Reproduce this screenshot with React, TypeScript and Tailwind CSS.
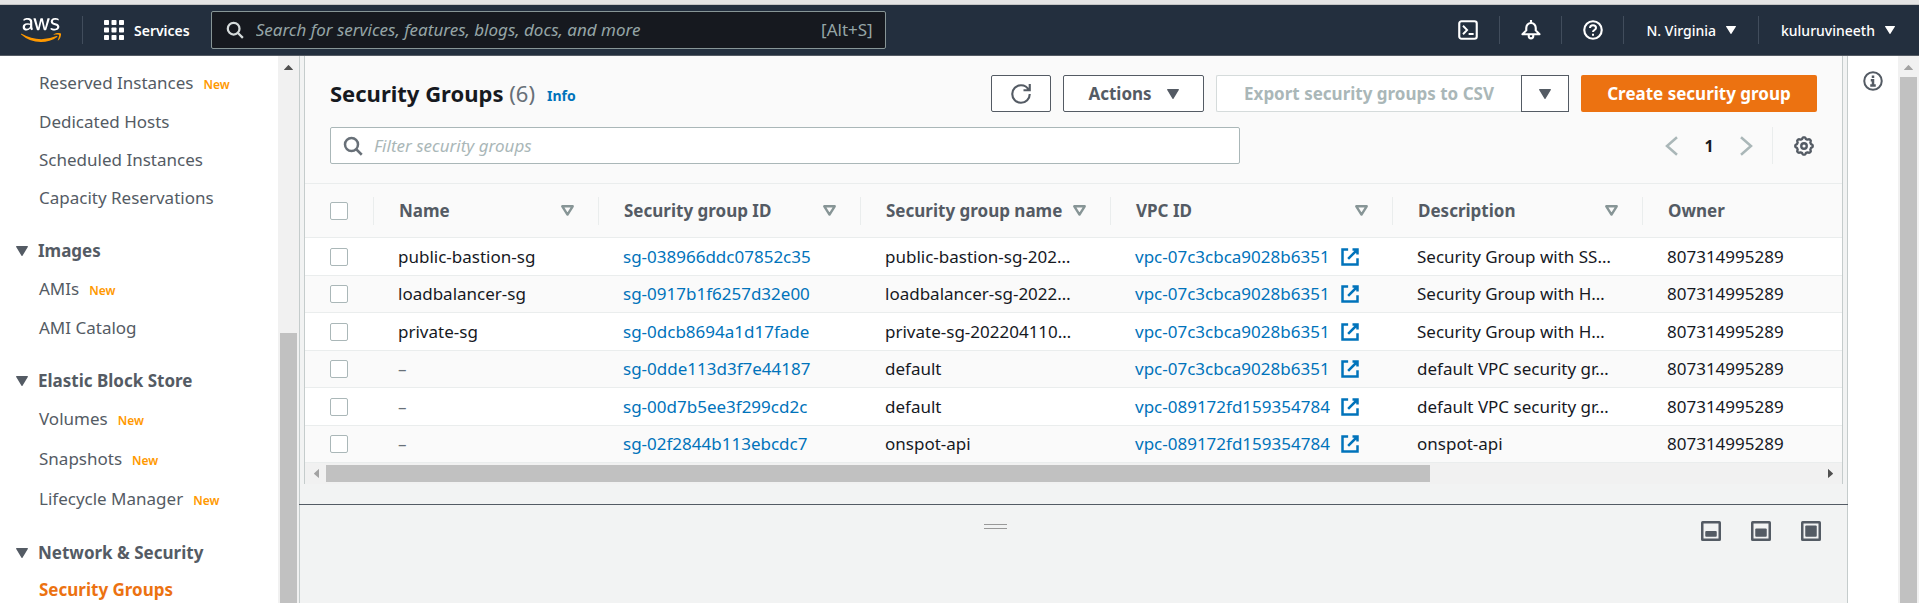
import type { ReactNode } from "react";
import { FaAws } from "react-icons/fa";

type NavItem = { label: string; isNew?: boolean; active?: boolean };
type NavSection = { title?: string; items: NavItem[] };

const NAV: NavSection[] = [
  {
    items: [
      { label: "Reserved Instances", isNew: true },
      { label: "Dedicated Hosts" },
      { label: "Scheduled Instances" },
      { label: "Capacity Reservations" },
    ],
  },
  { title: "Images", items: [{ label: "AMIs", isNew: true }, { label: "AMI Catalog" }] },
  {
    title: "Elastic Block Store",
    items: [
      { label: "Volumes", isNew: true },
      { label: "Snapshots", isNew: true },
      { label: "Lifecycle Manager", isNew: true },
    ],
  },
  { title: "Network & Security", items: [{ label: "Security Groups", active: true }] },
];

const COLUMNS = [
  { label: "Name", width: "w-[225px]" },
  { label: "Security group ID", width: "w-[262px]" },
  { label: "Security group name", width: "w-[250px]" },
  { label: "VPC ID", width: "w-[282px]" },
  { label: "Description", width: "w-[250px]" },
];

const ROWS = [
  ["public-bastion-sg", "sg-038966ddc07852c35", "public-bastion-sg-202…", "vpc-07c3cbca9028b6351", "Security Group with SS…"],
  ["loadbalancer-sg", "sg-0917b1f6257d32e00", "loadbalancer-sg-2022…", "vpc-07c3cbca9028b6351", "Security Group with H…"],
  ["private-sg", "sg-0dcb8694a1d17fade", "private-sg-202204110…", "vpc-07c3cbca9028b6351", "Security Group with H…"],
  ["–", "sg-0dde113d3f7e44187", "default", "vpc-07c3cbca9028b6351", "default VPC security gr…"],
  ["–", "sg-00d7b5ee3f299cd2c", "default", "vpc-089172fd159354784", "default VPC security gr…"],
  ["–", "sg-02f2844b113ebcdc7", "onspot-api", "vpc-089172fd159354784", "onspot-api"],
];
const OWNER = "807314995289";

function Icon({ children, className = "size-5" }: { children: ReactNode; className?: string }) {
  return (
    <svg viewBox="0 0 16 16" aria-hidden="true" className={`shrink-0 fill-none stroke-current stroke-2 ${className}`}>
      {children}
    </svg>
  );
}

function Caret({ className }: { className: string }) {
  return (
    <svg viewBox="0 0 12 10" aria-hidden="true" preserveAspectRatio="none" className={`shrink-0 fill-current ${className}`}>
      <path d="M.6 0h10.8c.5 0 .7.5.4.9L6.5 9.7c-.3.4-.7.4-1 0L.2.9C-.1.5.1 0 .6 0z" />
    </svg>
  );
}

const SearchIcon = ({ className }: { className: string }) => (
  <Icon className={className}>
    <circle cx="6.8" cy="6.8" r="5.2" />
    <path d="M10.6 10.6l4.4 4.4" />
  </Icon>
);

function gearPath() {
  const points: string[] = [];
  for (let i = 0; i <= 96; i++) {
    const a = (i / 96) * Math.PI * 2;
    const r = 6.35 + 0.6 * Math.max(-1, Math.min(1, 1.6 * Math.cos(8 * a)));
    points.push(`${(8 + r * Math.sin(a)).toFixed(2)} ${(8 - r * Math.cos(a)).toFixed(2)}`);
  }
  return `M${points.join("L")}z`;
}

function TopBar() {
  return (
    <header className="flex h-[51px] shrink-0 items-center border-b border-[#545b64] bg-[#232f3e] text-white">
      <svg width="0" height="0" aria-hidden="true" className="absolute">
        <linearGradient id="aws-fill" x1="0" y1="0" x2="0" y2="1">
          <stop offset="0.64" stopColor="#fff" />
          <stop offset="0.64" stopColor="#ff9900" />
        </linearGradient>
      </svg>
      <a href="#home" aria-label="AWS" className="ml-[21px] flex">
        <FaAws className="h-8 w-10 [&_path]:fill-[url(#aws-fill)]" />
      </a>
      <span className="ml-[21px] h-7 w-px bg-[#414d5c]" />
      <button type="button" className="ml-[21px] flex items-center gap-[10px] text-[14px] font-semibold">
        <svg viewBox="0 0 20 20" aria-hidden="true" className="size-5 fill-white">
          {[0, 7.5, 15].map((y) => [0, 7.5, 15].map((x) => <rect key={`${x}-${y}`} x={x} y={y} width="5" height="5" rx="0.8" />))}
        </svg>
        Services
      </button>
      <label className="ml-[21px] flex h-[38px] w-[675px] items-center rounded-[2px] border border-[#879596] bg-[#16191f] pr-3 pl-[14px]">
        <SearchIcon className="size-[18px] text-[#d5dbdb]" />
        <input
          type="search"
          aria-label="Search"
          placeholder="Search for services, features, blogs, docs, and more"
          className="ml-3 min-w-0 flex-1 bg-transparent text-[17px] outline-none placeholder:text-[#95a5a6] placeholder:italic"
        />
        <span className="text-[17px] text-[#95a5a6]">[Alt+S]</span>
      </label>
      <div className="ml-auto flex h-7 items-stretch">
        <button type="button" aria-label="CloudShell" className="flex w-[62px] items-center justify-center">
          <Icon>
            <rect x="1" y="1" width="14" height="14" rx="1.8" strokeWidth="1.7" />
            <path d="M4 4.6L7.3 8 4 11.4M8.5 11.2h4" strokeWidth="1.5" />
          </Icon>
        </button>
        <button type="button" aria-label="Notifications" className="flex w-[62px] items-center justify-center border-l border-[#414d5c]">
          <Icon>
            <path d="M8 0v2.200M1.200 11.400h13.600L11.800 8.300V6.400c0-2.300-1.500-4-3.800-4s-3.800 1.700-3.800 4v1.900zM6.200 11.500v1.500c0 2.200 3.600 2.200 3.600 0v-1.500" strokeWidth="1.700" strokeLinejoin="round" />
          </Icon>
        </button>
        <button type="button" aria-label="Help" className="flex w-[62px] items-center justify-center border-l border-[#414d5c]">
          <Icon>
            <circle cx="8" cy="8" r="7" strokeWidth="1.7" />
            <path d="M5.600 6.400C5.600 5 6.600 4.100 8 4.100s2.400.9 2.400 2.200C10.400 8 8 8 8 9.600M8 10.900v1.600" strokeWidth="1.600" />
          </Icon>
        </button>
        <button type="button" className="flex items-center gap-[10px] border-l border-[#414d5c] px-[22px] text-[14px] font-medium">
          N. Virginia
          <Caret className="h-2 w-[10px]" />
        </button>
        <button type="button" className="flex items-center gap-[10px] border-l border-[#414d5c] pr-6 pl-[22px] text-[14px] font-medium">
          kuluruvineeth
          <Caret className="h-2 w-[10px]" />
        </button>
      </div>
    </header>
  );
}

function SideNav() {
  return (
    <div className="flex w-[299px] shrink-0 bg-white">
      <nav aria-label="EC2" className="min-w-0 flex-1 overflow-hidden pt-[7px]">
        {NAV.map((section, i) => (
          <section key={i}>
            {section.title && (
              <h2 className="mt-[15px] h-[37px] text-[17px] font-bold text-[#545b64]">
                <button type="button" className="flex h-full items-center gap-[10px] pl-4">
                  <Caret className="h-[10px] w-3" />
                  {section.title}
                </button>
              </h2>
            )}
            <ul>
              {section.items.map((item) => (
                <li key={item.label} className={`flex items-center pl-[39px] ${item.isNew ? "h-10" : "h-[38px]"}`}>
                  <a
                    href={`#${item.label.replace(/ /g, "-").toLowerCase()}`}
                    className={item.active ? "text-[17px] font-bold text-[#ec7211]" : "text-[17px] text-[#545b64]"}
                  >
                    {item.label}
                  </a>
                  {item.isNew && <span className="ml-[10px] pt-[3px] text-[12px] font-semibold text-[#ff9900]">New</span>}
                </li>
              ))}
            </ul>
          </section>
        ))}
      </nav>
      <div aria-hidden="true" className="flex w-[21px] flex-col items-center bg-[#f1f1f1] pt-[9px] text-[#505050]">
        <Caret className="h-[5px] w-[9px] rotate-180" />
        <div className="mt-[263px] w-[17px] flex-1 bg-[#c1c1c1]" />
      </div>
    </div>
  );
}

function Checkbox({ label }: { label: string }) {
  return (
    <input
      type="checkbox"
      aria-label={label}
      className="block size-[18px] appearance-none rounded-[2px] border border-[#aab7b8] bg-white checked:bg-[#0073bb]"
    />
  );
}

const outlined = "flex h-[37px] items-center justify-center border border-[#545b64] bg-white text-[17px] font-bold text-[#545b64]";

function GroupsPanel() {
  return (
    <section className="mx-1 border-x border-[#c5cccc] bg-[#fafafa]">
      <div className="flex items-center px-[25px] pt-[19px]">
        <h1 className="text-[22px] leading-[37px] font-bold text-[#16191f]">
          Security Groups <span className="font-normal text-[#687078]">(6)</span>
        </h1>
        <a href="#info" className="ml-3 pt-1 text-[14px] font-bold text-[#0073bb]">
          Info
        </a>
        <div className="ml-auto flex gap-3">
          <button type="button" aria-label="Refresh" className={`${outlined} w-[60px] rounded-[2px]`}>
            <Icon>
              <path d="M15 8c0 3.870-3.130 7-7 7s-7-3.130-7-7 3.130-7 7-7c2.790 0 5.200 1.640 6.320 4M15 0v5h-5" strokeWidth="1.700" />
            </Icon>
          </button>
          <button type="button" className={`${outlined} w-[141px] gap-[15px] rounded-[2px]`}>
            Actions
            <Caret className="h-[10px] w-3" />
          </button>
          <div className="flex">
            <button
              type="button"
              disabled
              className="flex h-[37px] w-[305px] items-center justify-center rounded-l-[2px] border border-r-0 border-[#d5dbdb] bg-white text-[17px] font-bold text-[#aab7b8]"
            >
              Export security groups to CSV
            </button>
            <button type="button" aria-label="Export options" className={`${outlined} w-12`}>
              <Caret className="h-[10px] w-3" />
            </button>
          </div>
          <button type="button" className="h-[37px] w-[236px] rounded-[2px] bg-[#ec7211] text-[17px] font-bold text-white">
            Create security group
          </button>
        </div>
      </div>
      <div className="flex items-center px-[25px] pt-[15px] pb-[19px]">
        <label className="flex h-[37px] w-[910px] items-center rounded-[2px] border border-[#aab7b8] bg-white px-3">
          <SearchIcon className="size-5 text-[#687078]" />
          <input
            type="search"
            aria-label="Filter security groups"
            placeholder="Filter security groups"
            className="ml-[11px] min-w-0 flex-1 bg-transparent text-[17px] outline-none placeholder:text-[#aab7b8] placeholder:italic"
          />
        </label>
        <div className="ml-auto flex items-center text-[#aab7b8]">
          <button type="button" aria-label="Previous page">
            <Icon>
              <path d="M12 1L4 8l8 7" />
            </Icon>
          </button>
          <button type="button" className="w-[54px] text-center text-[16px] font-bold text-[#16191f]">
            1
          </button>
          <button type="button" aria-label="Next page">
            <Icon>
              <path d="M4 1l8 7-8 7" />
            </Icon>
          </button>
          <span className="ml-4 h-[37px] w-px bg-[#eaeded]" />
          <button type="button" aria-label="Preferences" className="mr-[3px] ml-[21px] text-[#545b64]">
            <Icon>
              <path d={gearPath()} strokeWidth="1.900" strokeLinejoin="round" />
              <circle cx="8" cy="8" r="2.200" strokeWidth="1.900" />
            </Icon>
          </button>
        </div>
      </div>
      <table className="w-full table-fixed border-collapse text-left text-[17px] leading-6 text-[#16191f]">
        <thead>
          <tr className="h-[54px] border-y border-[#eaeded] text-[#545b64]">
            <th className="w-[68px] p-0 pl-[25px]">
              <Checkbox label="Select all" />
            </th>
            {COLUMNS.map((c) => (
              <th key={c.label} className={`p-0 font-bold ${c.width}`}>
                <div className="flex h-7 items-center justify-between border-l border-[#eaeded] pr-6 pl-[25px]">
                  {c.label}
                  <button type="button" aria-label={`Sort by ${c.label}`} className="text-[#879596]">
                    <svg viewBox="0 0 13 11" aria-hidden="true" className="h-[11px] w-[13px] fill-none stroke-current">
                      <path d="M1.300 1.300h10.400L6.500 9.600z" strokeWidth="2.400" strokeLinejoin="round" />
                    </svg>
                  </button>
                </div>
              </th>
            ))}
            <th className="p-0 font-bold">
              <div className="flex h-7 items-center border-l border-[#eaeded] pl-[25px]">Owner</div>
            </th>
          </tr>
        </thead>
        <tbody>
          {ROWS.map(([name, id, group, vpc, description]) => (
            <tr key={id} className="border-b border-[#eaeded] odd:h-[38px] odd:bg-white even:h-[37px]">
              <td className="p-0 pl-[25px]">
                <Checkbox label={`Select ${id}`} />
              </td>
              <td className={`p-0 pl-[25px] ${name === "–" ? "text-[#687078]" : ""}`}>{name}</td>
              <td className="p-0 pl-[25px]">
                <a href={`#${id}`} className="text-[#0073bb]">
                  {id}
                </a>
              </td>
              <td className="p-0 pl-[25px] whitespace-nowrap">{group}</td>
              <td className="p-0 pl-[25px]">
                <a href={`#${vpc}`} className="flex items-center gap-[10px] text-[#0073bb]">
                  {vpc}
                  <Icon>
                    <path d="M10 2h4v4M6.500 9.500L14 2M14 9v5H2V2h4.500" />
                  </Icon>
                </a>
              </td>
              <td className="p-0 pl-[25px] whitespace-nowrap">{description}</td>
              <td className="p-0 pl-[25px]">{OWNER}</td>
            </tr>
          ))}
        </tbody>
      </table>
      <div aria-hidden="true" className="flex h-[21px] items-center bg-[#f1f1f1] px-[7px]">
        <Caret className="h-[5px] w-[9px] rotate-90 text-[#a3a3a3]" />
        <div className="mr-auto ml-[5px] h-[17px] w-29/40 bg-[#c1c1c1]" />
        <Caret className="h-[5px] w-[9px] -rotate-90 text-[#505050]" />
      </div>
    </section>
  );
}

const SPLIT_ICONS = [
  { label: "Minimise panel", y: 8, height: 4.5 },
  { label: "Half-height panel", y: 6, height: 6.5 },
  { label: "Full-height panel", y: 3.5, height: 9 },
];

function SplitPanel() {
  return (
    <section aria-label="Details" className="relative -mx-px flex flex-1 items-start justify-end gap-[30px] border-t border-[#545b64] pt-4 pr-[27px]">
      <div role="separator" className="absolute top-[19px] left-[685px] h-[5px] w-[23px] border-y border-[#999]" />
      {SPLIT_ICONS.map((icon) => (
        <button key={icon.label} type="button" aria-label={icon.label} className="text-[#545b64]">
          <Icon>
            <rect x="1" y="1" width="14" height="14" rx="0.3" />
            <rect x="3.400" y={icon.y} width="9.200" height={icon.height} rx="0.800" fill="currentColor" stroke="none" />
          </Icon>
        </button>
      ))}
    </section>
  );
}

export default function App() {
  return (
    <div className="flex h-screen flex-col overflow-hidden bg-white font-['Noto_Sans',sans-serif]">
      <div className="h-[5px] shrink-0 border-b border-[#c4c4c4] bg-[#e4e4e4]" />
      <TopBar />
      <div className="flex min-h-0 flex-1">
        <SideNav />
        <main className="flex min-w-0 flex-1 flex-col border-x border-[#c5cccc] bg-[#f2f3f3]">
          <GroupsPanel />
          <div className="h-5 shrink-0" />
          <SplitPanel />
        </main>
        <aside className="flex w-[50px] shrink-0 justify-center pt-[15px] text-[#545b64]">
          <button type="button" aria-label="Info" className="h-5">
            <Icon>
              <circle cx="8" cy="8" r="7" strokeWidth="1.600" />
              <path d="M8 3.500v2M6.200 7.300H8v4M5.800 11.600h4.400" />
            </Icon>
          </button>
        </aside>
        <div aria-hidden="true" className="flex w-[21px] shrink-0 flex-col items-center bg-[#f1f1f1] pt-[9px] text-[#a3a3a3]">
          <Caret className="h-[5px] w-[9px] rotate-180" />
          <div className="mt-[7px] w-[17px] flex-1 bg-[#c1c1c1]" />
        </div>
      </div>
    </div>
  );
}
